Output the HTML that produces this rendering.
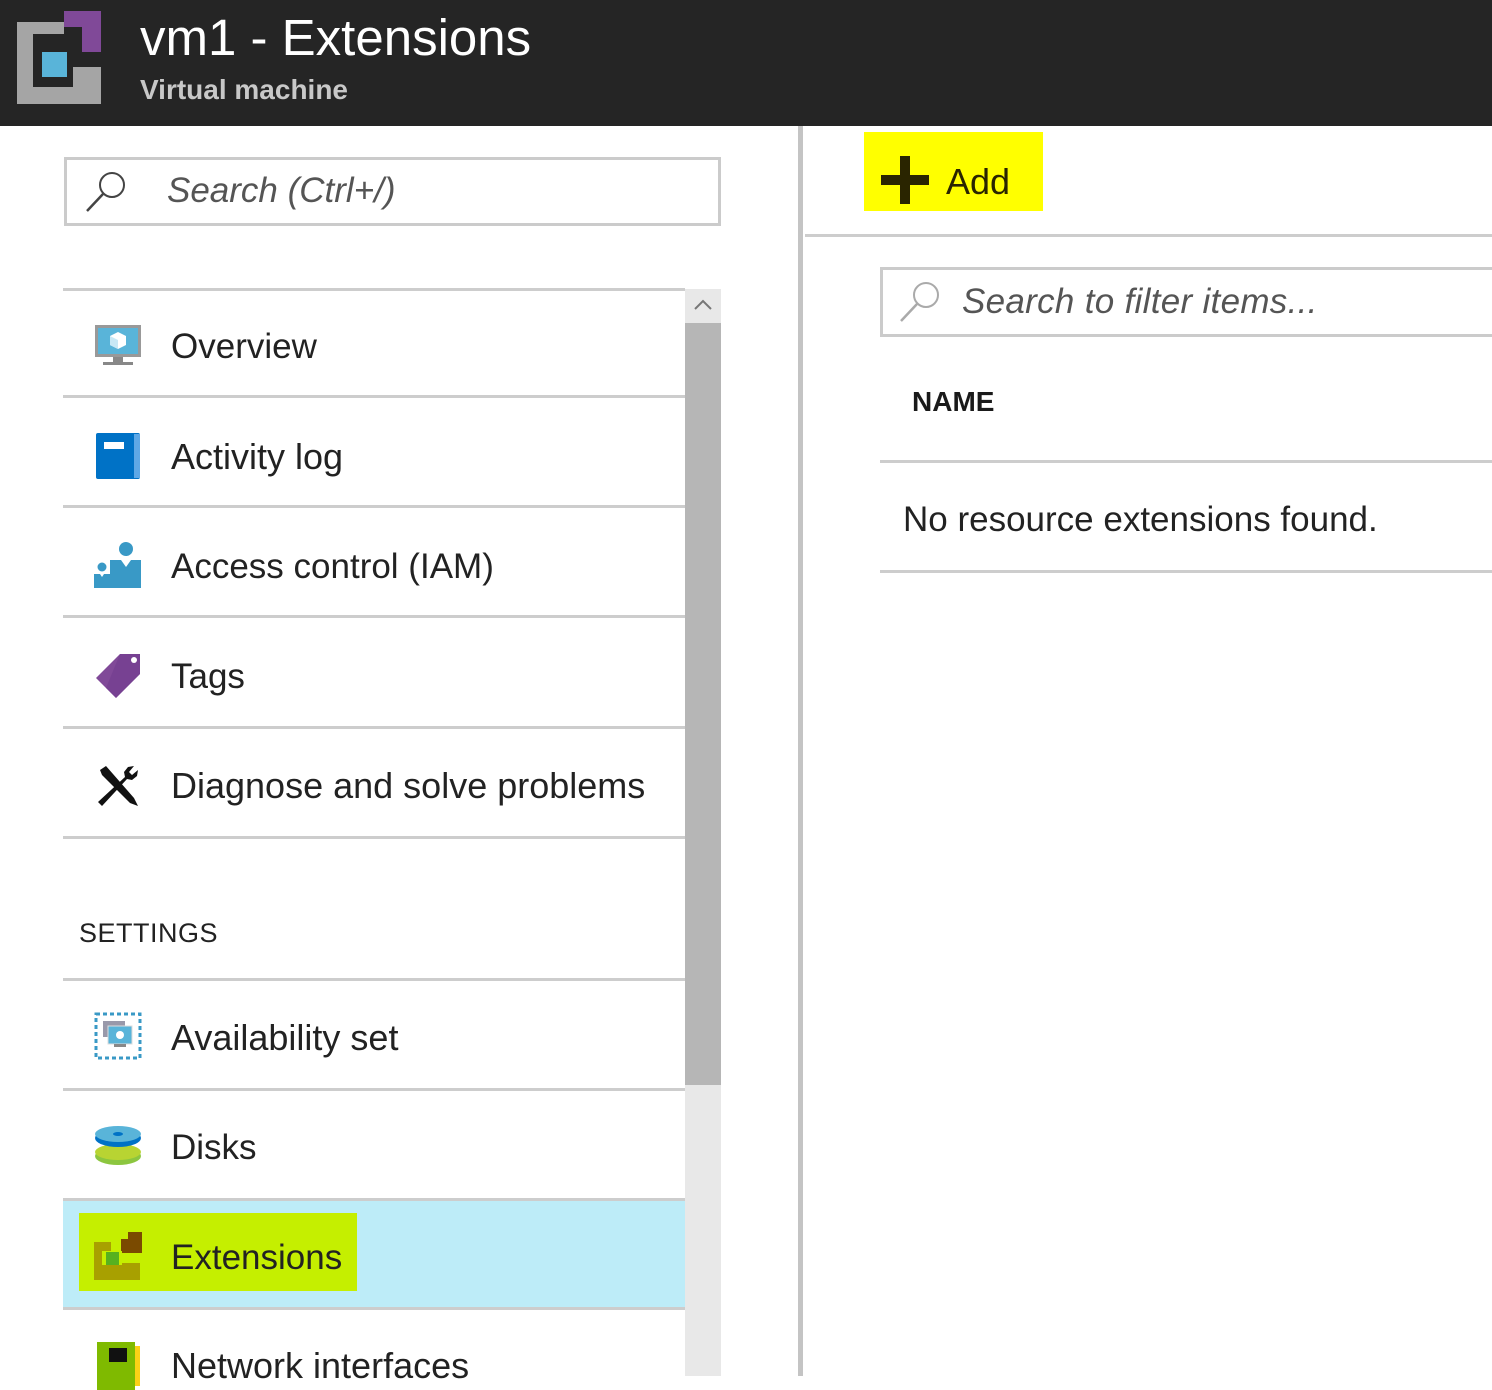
<!DOCTYPE html>
<html><head><meta charset="utf-8"><style>
*{margin:0;padding:0;box-sizing:border-box}
body{width:1492px;height:1376px;overflow:hidden;background:#fff;font-family:"Liberation Sans",sans-serif;color:#222;position:relative}
.a{position:absolute}
.hl{position:absolute;height:3px;background:#cdcdcd}
.t{position:absolute;font-size:35px;line-height:40px;white-space:nowrap;color:#222}
.ic{position:absolute;left:94px;width:48px;height:48px}
</style></head><body>
<div class="a" style="left:0;top:0;width:1492px;height:126px;background:#252525"></div>
<svg class="a" style="left:0;top:0" width="120" height="120">
<rect x="17" y="22" width="84" height="82" fill="#a5a5a5"/>
<rect x="33" y="34" width="40" height="53" fill="#252525"/>
<rect x="33" y="34" width="68" height="33" fill="#252525"/>
<rect x="64" y="11" width="37" height="41" fill="#804998"/>
<rect x="64" y="27" width="18" height="25" fill="#252525"/>
<rect x="42" y="52" width="25" height="25" fill="#59b4d9"/>
</svg>
<div class="a" style="left:140px;top:8px;font-size:51px;line-height:60px;color:#fff">vm1 - Extensions</div>
<div class="a" style="left:140px;top:72px;font-size:28px;line-height:36px;color:#c8c8c8;font-weight:bold">Virtual machine</div>

<div class="a" style="left:64px;top:157px;width:657px;height:69px;border:3px solid #cbcbcb"></div>
<svg class="a" style="left:84px;top:168px" width="46" height="46"><circle cx="28" cy="17" r="12" fill="none" stroke="#444" stroke-width="2"/><line x1="19" y1="26" x2="3" y2="43" stroke="#444" stroke-width="2.5"/></svg>
<div class="a" style="left:167px;top:170px;font-size:35px;line-height:42px;font-style:italic;color:#555">Search (Ctrl+/)</div>

<div class="hl" style="left:63px;top:288px;width:622px"></div>
<div class="hl" style="left:63px;top:395px;width:622px"></div>
<div class="hl" style="left:63px;top:505px;width:622px"></div>
<div class="hl" style="left:63px;top:615px;width:622px"></div>
<div class="hl" style="left:63px;top:726px;width:622px"></div>
<div class="hl" style="left:63px;top:836px;width:622px"></div>
<div class="hl" style="left:63px;top:978px;width:622px"></div>
<div class="hl" style="left:63px;top:1088px;width:622px"></div>
<div class="hl" style="left:63px;top:1198px;width:622px"></div>
<div class="hl" style="left:63px;top:1307px;width:622px"></div>
<div class="a" style="left:63px;top:1201px;width:622px;height:106px;background:#bdecf8"></div>
<div class="a" style="left:79px;top:1213px;width:278px;height:78px;background:#c5ef00"></div>

<div class="a" style="left:685px;top:289px;width:36px;height:1087px;background:#e8e8e8"></div>
<div class="a" style="left:685px;top:323px;width:36px;height:762px;background:#b6b6b6"></div>
<svg class="a" style="left:693px;top:298px" width="20" height="14"><polyline points="2,11 10,3 18,11" fill="none" stroke="#777" stroke-width="2"/></svg>

<svg class="ic" style="top:323px" viewBox="0 0 48 48"><rect x="1" y="2" width="46" height="32" fill="#999"/><rect x="4" y="5" width="40" height="26" fill="#59b4d9"/><rect x="19" y="34" width="10" height="5" fill="#888"/><rect x="9" y="39" width="30" height="3" fill="#888"/><path d="M24 9l8 4v9l-8 4-8-4v-9z" fill="#fff"/><path d="M24 17v9l-8-4v-9z" fill="#c8e8f5"/></svg>
<svg class="ic" style="top:432px" viewBox="0 0 48 48"><rect x="2" y="1" width="44" height="46" rx="2" fill="#0072c6"/><rect x="40" y="2" width="6" height="44" fill="#5ea8e6"/><rect x="10" y="10" width="20" height="7" fill="#fff"/></svg>
<svg class="ic" style="top:542px" viewBox="0 0 48 48"><circle cx="32" cy="7" r="7" fill="#3999c6"/><path d="M16 18h11l5 7 5-7h10v28H16z" fill="#3999c6"/><circle cx="8" cy="25" r="4.5" fill="#3999c6"/><path d="M0 32h6l2 3 2-3h6v14H0z" fill="#3999c6"/></svg>
<svg class="ic" style="top:652px" viewBox="0 0 48 48"><path d="M26 2h20v20L22 46 2 26z" fill="#804998"/><path d="M26 2h20v20L22 46 12 36z" fill="#6e3a8c" opacity=".5"/><circle cx="40" cy="8" r="3" fill="#fff"/></svg>
<svg class="ic" style="top:762px" viewBox="0 0 48 48"><path d="M6 8l6-4 28 32 4 8-8-3L8 13z" fill="#111"/><path d="M40 4l-6 1-4 5 1 5L4 40l4 4 25-27 5 1 5-4 1-6-6 5-3-3z" fill="#111"/></svg>
<svg class="ic" style="top:1012px" viewBox="0 0 48 48"><rect x="2" y="2" width="44" height="44" fill="none" stroke="#3999c6" stroke-width="3" stroke-dasharray="4 3"/><rect x="9" y="9" width="22" height="16" fill="#99a"/><rect x="14" y="14" width="24" height="18" fill="#59b4d9" stroke="#ddd"/><rect x="20" y="32" width="12" height="3" fill="#888"/><circle cx="26" cy="23" r="4" fill="#fff"/></svg>
<svg class="ic" style="top:1122px" viewBox="0 0 48 48"><ellipse cx="24" cy="34" rx="23" ry="9" fill="#8cc63f"/><ellipse cx="24" cy="30" rx="23" ry="8" fill="#b8d432"/><ellipse cx="24" cy="16" rx="23" ry="9" fill="#0072c6"/><ellipse cx="24" cy="12" rx="23" ry="8" fill="#59b4d9"/><ellipse cx="24" cy="12" rx="5" ry="2" fill="#0072c6"/></svg>
<svg class="ic" style="top:1232px" viewBox="0 0 48 48"><rect x="0" y="10" width="17" height="38" fill="#a8a000"/><rect x="0" y="31" width="46" height="17" fill="#a8a000"/><rect x="27" y="0" width="21" height="21" fill="#7a4a00"/><rect x="27" y="0" width="7" height="7" fill="#c5ef00"/><rect x="8" y="19" width="20" height="14" fill="#c5ef00"/><rect x="12" y="20" width="13" height="13" fill="#57b11f"/></svg>
<svg class="ic" style="top:1342px" viewBox="0 0 48 48"><rect x="3" y="0" width="38" height="48" fill="#7fba00"/><rect x="41" y="4" width="5" height="40" fill="#fcd116"/><rect x="15" y="6" width="18" height="14" fill="#111"/></svg>

<div class="t" style="left:171px;top:327px">Overview</div>
<div class="t" style="left:171px;top:437px;font-size:36px">Activity log</div>
<div class="t" style="left:171px;top:547px;font-size:35px">Access control (IAM)</div>
<div class="t" style="left:171px;top:657px">Tags</div>
<div class="t" style="left:171px;top:766px;font-size:36px">Diagnose and solve problems</div>
<div class="a" style="left:79px;top:917px;font-size:27px;line-height:32px;color:#222;letter-spacing:0.5px">SETTINGS</div>
<div class="t" style="left:171px;top:1018px;font-size:36px">Availability set</div>
<div class="t" style="left:171px;top:1128px">Disks</div>
<div class="t" style="left:171px;top:1238px">Extensions</div>
<div class="t" style="left:171px;top:1346px;font-size:36px">Network interfaces</div>

<div class="a" style="left:798px;top:126px;width:5px;height:1250px;background:#c4c4c4"></div>

<div class="a" style="left:864px;top:132px;width:179px;height:79px;background:#ffff00"></div>
<svg class="a" style="left:881px;top:156px" width="48" height="48"><rect x="19" y="0" width="10" height="48" fill="#2a2500"/><rect x="0" y="19" width="48" height="10" fill="#2a2500"/></svg>
<div class="a" style="left:946px;top:161px;font-size:36px;line-height:42px;color:#2a2500">Add</div>
<div class="hl" style="left:805px;top:234px;width:687px"></div>
<div class="a" style="left:880px;top:267px;width:620px;height:70px;border:3px solid #cbcbcb"></div>
<svg class="a" style="left:898px;top:278px" width="46" height="46"><circle cx="28" cy="17" r="12" fill="none" stroke="#aaa" stroke-width="2"/><line x1="19" y1="26" x2="3" y2="43" stroke="#aaa" stroke-width="2.5"/></svg>
<div class="a" style="left:962px;top:281px;font-size:35px;line-height:42px;font-style:italic;color:#555;letter-spacing:0.3px">Search to filter items...</div>
<div class="a" style="left:912px;top:386px;font-size:28px;line-height:32px;font-weight:bold;color:#1a1a1a">NAME</div>
<div class="hl" style="left:880px;top:460px;width:612px"></div>
<div class="a" style="left:903px;top:500px;font-size:35px;line-height:40px;color:#222">No resource extensions found.</div>
<div class="hl" style="left:880px;top:570px;width:612px"></div>
</body></html>
